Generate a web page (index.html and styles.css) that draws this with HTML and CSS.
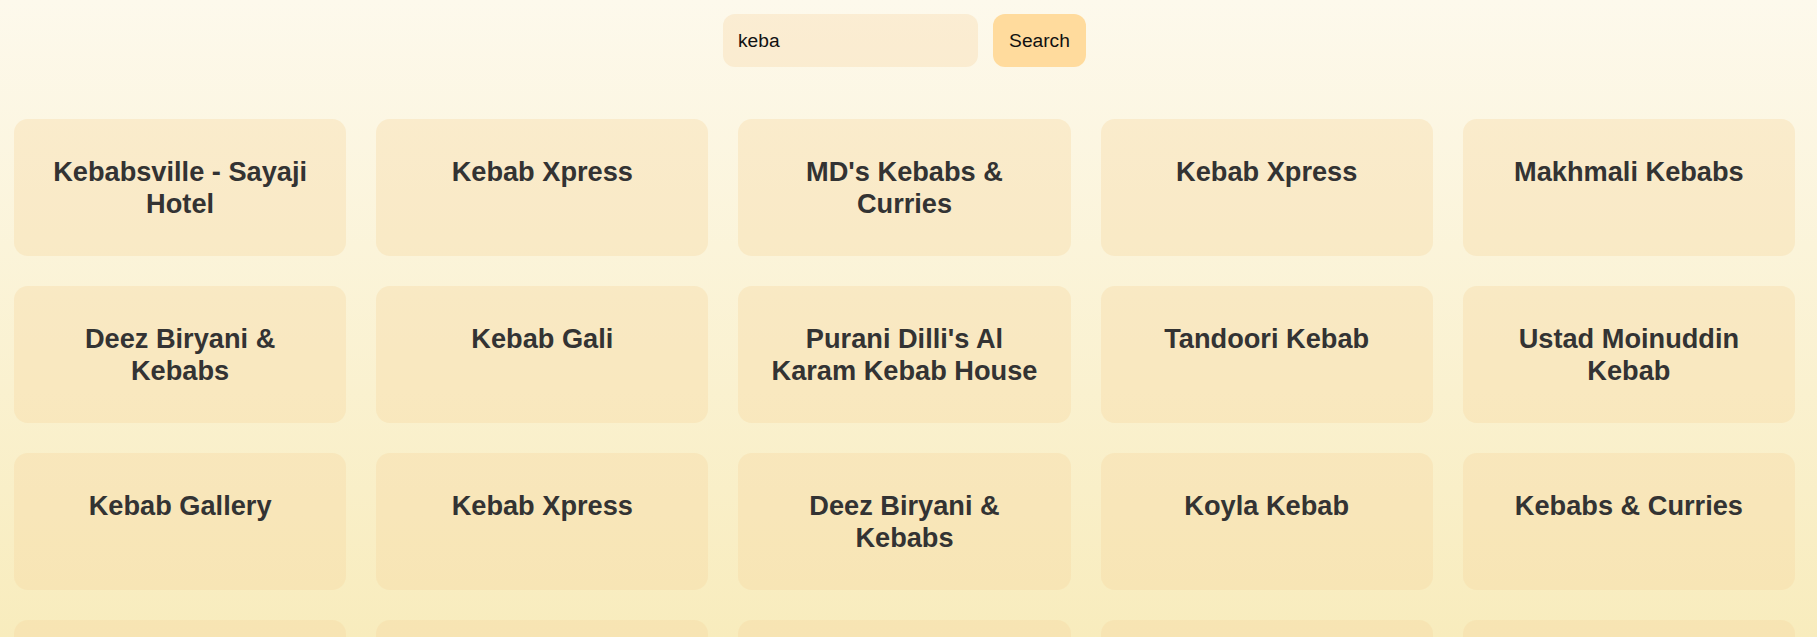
FILE: index.html
```html
<!DOCTYPE html>
<html lang="en">
<head>
<meta charset="utf-8">
<title>Restaurant search</title>
<link rel="stylesheet" href="styles.css">
</head>
<body>
<div class="page">
  <form class="search" onsubmit="return false">
    <input class="search-input" type="text" value="keba">
    <button class="search-btn" type="submit">Search</button>
  </form>
  <div class="grid">
    <div class="card"><h2>Kebabsville - Sayaji Hotel</h2></div>
    <div class="card"><h2>Kebab Xpress</h2></div>
    <div class="card"><h2>MD's Kebabs &amp; Curries</h2></div>
    <div class="card"><h2>Kebab Xpress</h2></div>
    <div class="card"><h2>Makhmali Kebabs</h2></div>
    <div class="card"><h2>Deez Biryani &amp; Kebabs</h2></div>
    <div class="card"><h2>Kebab Gali</h2></div>
    <div class="card"><h2>Purani Dilli's Al Karam Kebab House</h2></div>
    <div class="card"><h2>Tandoori Kebab</h2></div>
    <div class="card"><h2>Ustad Moinuddin Kebab</h2></div>
    <div class="card"><h2>Kebab Gallery</h2></div>
    <div class="card"><h2>Kebab Xpress</h2></div>
    <div class="card"><h2>Deez Biryani &amp; Kebabs</h2></div>
    <div class="card"><h2>Koyla Kebab</h2></div>
    <div class="card"><h2>Kebabs &amp; Curries</h2></div>
    <div class="card"><h2>Kebab Junction</h2></div>
    <div class="card"><h2>Kebab Corner</h2></div>
    <div class="card"><h2>Kebab House</h2></div>
    <div class="card"><h2>Kebab Nation</h2></div>
    <div class="card"><h2>Kebab King</h2></div>
  </div>
</div>
</body>
</html>
```

FILE: styles.css
```css
html {
  background: linear-gradient(180deg, #fdf9ec 0%, #f8ecbd 100%) fixed;
  min-height: 100%;
}
body {
  margin: 0;
  font-family: "Liberation Sans", Arial, sans-serif;
  color: #333;
}
.page {
  padding: 14px 22px 40px 14px;
}
.search {
  display: flex;
  justify-content: center;
  gap: 15px;
  margin: 0 0 52px 0;
}
.search-input {
  box-sizing: border-box;
  width: 255px;
  height: 53px;
  border: none;
  border-radius: 12px;
  padding: 0 15px;
  background: rgba(245, 215, 165, 0.35);
  font-family: "Liberation Sans", Arial, sans-serif;
  font-size: 19.2px;
  color: #111;
  outline: none;
}
.search-btn {
  box-sizing: border-box;
  width: 93px;
  height: 53px;
  border: none;
  border-radius: 12px;
  background: #ffdb9d;
  font-family: "Liberation Sans", Arial, sans-serif;
  font-size: 19.2px;
  color: #111;
  padding: 0;
}
.grid {
  display: grid;
  grid-template-columns: repeat(5, 1fr);
  gap: 30px;
}
.card {
  box-sizing: border-box;
  height: 137px;
  border-radius: 14px;
  background: rgba(245, 215, 160, 0.35);
  padding: 37px 25px 0;
  text-align: center;
}
.card h2 {
  margin: 0;
  font-size: 27.2px;
  font-weight: 700;
  line-height: normal;
  color: #333;
}
```
